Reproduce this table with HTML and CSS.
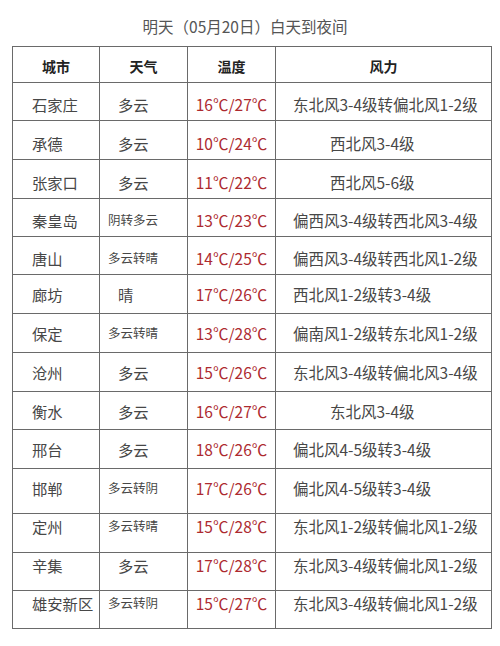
FILE: index.html
```html
<!DOCTYPE html>
<html lang="zh-CN">
<head>
<meta charset="utf-8">
<title>明天（05月20日）白天到夜间</title>
<link rel="stylesheet" href="styles.css">
</head>
<body>
<div class="page">
  <h1 class="title">明天（05月20日）白天到夜间</h1>
  <table class="forecast">
    <colgroup>
      <col class="c-city"><col class="c-wx"><col class="c-temp"><col class="c-wind">
    </colgroup>
    <thead>
      <tr class="h-row">
        <th>城市</th><th>天气</th><th>温度</th><th>风力</th>
      </tr>
    </thead>
    <tbody>
      <tr class="row r38 low"><td class="city">石家庄</td><td class="wx">多云</td><td class="temp">16℃/27℃</td><td class="wind">东北风3-4级转偏北风1-2级</td></tr>
      <tr class="row r39 low"><td class="city">承德</td><td class="wx">多云</td><td class="temp">10℃/24℃</td><td class="wind short">西北风3-4级</td></tr>
      <tr class="row r39 low"><td class="city">张家口</td><td class="wx">多云</td><td class="temp">11℃/22℃</td><td class="wind short">西北风5-6级</td></tr>
      <tr class="row r38 low"><td class="city">秦皇岛</td><td class="wx small">阴转多云</td><td class="temp">13℃/23℃</td><td class="wind">偏西风3-4级转西北风3-4级</td></tr>
      <tr class="row r38 low"><td class="city">唐山</td><td class="wx small">多云转晴</td><td class="temp">14℃/25℃</td><td class="wind">偏西风3-4级转西北风1-2级</td></tr>
      <tr class="row r39"><td class="city">廊坊</td><td class="wx">晴</td><td class="temp">17℃/26℃</td><td class="wind">西北风1-2级转3-4级</td></tr>
      <tr class="row r39"><td class="city">保定</td><td class="wx small">多云转晴</td><td class="temp">13℃/28℃</td><td class="wind">偏南风1-2级转东北风1-2级</td></tr>
      <tr class="row r39"><td class="city">沧州</td><td class="wx">多云</td><td class="temp">15℃/26℃</td><td class="wind">东北风3-4级转偏北风3-4级</td></tr>
      <tr class="row r38"><td class="city">衡水</td><td class="wx">多云</td><td class="temp">16℃/27℃</td><td class="wind short">东北风3-4级</td></tr>
      <tr class="row r39"><td class="city">邢台</td><td class="wx">多云</td><td class="temp">18℃/26℃</td><td class="wind">偏北风4-5级转3-4级</td></tr>
      <tr class="row r45 lift-s"><td class="city">邯郸</td><td class="wx small">多云转阴</td><td class="temp">17℃/26℃</td><td class="wind">偏北风4-5级转3-4级</td></tr>
      <tr class="row r39 lift"><td class="city">定州</td><td class="wx small">多云转晴</td><td class="temp">15℃/28℃</td><td class="wind">东北风1-2级转偏北风1-2级</td></tr>
      <tr class="row r38 lift"><td class="city">辛集</td><td class="wx">多云</td><td class="temp">17℃/28℃</td><td class="wind">东北风3-4级转偏北风1-2级</td></tr>
      <tr class="row r38 lift"><td class="city">雄安新区</td><td class="wx small">多云转阴</td><td class="temp">15℃/27℃</td><td class="wind">东北风3-4级转偏北风1-2级</td></tr>
    </tbody>
  </table>
</div>
</body>
</html>
```
FILE: styles.css
```css
html, body {
  margin: 0;
  padding: 0;
  background: #ffffff;
}

body {
  font-family: "Noto Sans CJK SC", "Noto Sans", sans-serif;
  color: #474747;
}

.page {
  width: 500px;
  height: 646px;
  overflow: hidden;
}

.title {
  margin: 0;
  height: 46px;
  box-sizing: border-box;
  padding: 16px 10px 0 0;
  font-size: 15.5px;
  line-height: 20px;
  font-weight: 400;
  text-align: center;
  color: #555555;
}

.forecast {
  margin-left: 12px;
  width: 479px;
  border-collapse: collapse;
  table-layout: fixed;
}

.c-city { width: 87px; }
.c-wx { width: 88px; }
.c-temp { width: 88px; }
.c-wind { width: 216px; }

.forecast th,
.forecast td {
  border: 1px solid #6a6a6a;
  padding: 0;
  white-space: nowrap;
  overflow: hidden;
}

.h-row { height: 36px; }

.forecast th {
  font-size: 14px;
  font-weight: 700;
  color: #222222;
  text-align: center;
  vertical-align: middle;
  padding-top: 2px;
}

.r38 { height: 38px; }
.r39 { height: 39px; }
.r45 { height: 45px; }

.forecast td {
  vertical-align: middle;
  line-height: 20px;
}

.row.low td { padding-top: 5px; }
.row.lift-s td { padding-bottom: 6px; }
.row.lift td { padding-bottom: 14px; }

.city {
  font-size: 15.3px;
  padding-left: 19px !important;
  text-align: left;
}

.wx {
  font-size: 15.3px;
  padding-left: 18px !important;
  text-align: left;
}

.wx.small {
  font-size: 12.5px;
  padding-left: 8px !important;
}

.temp {
  font-size: 15.5px;
  color: #ad2a2f;
  text-align: center;
}

.wind {
  font-size: 15.5px;
  padding-left: 17px !important;
  text-align: left;
}

.wind.short {
  padding-left: 54px !important;
}
```
